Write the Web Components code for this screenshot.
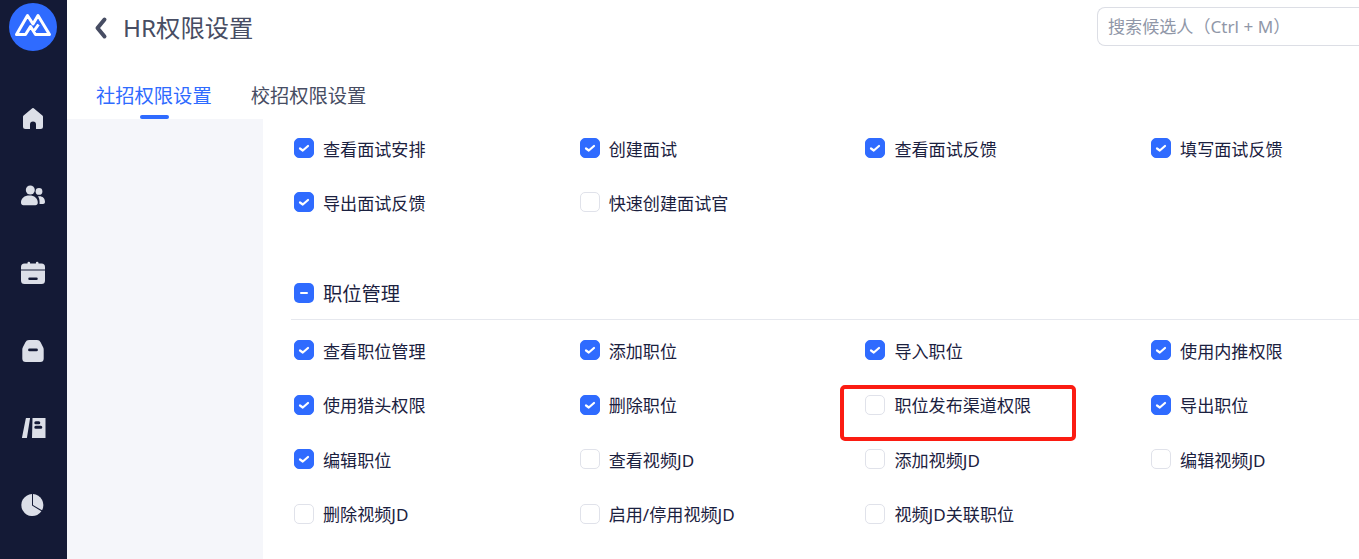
<!DOCTYPE html>
<html lang="zh-CN">
<head>
<meta charset="utf-8">
<title>HR权限设置</title>
<style>
  html, body { margin: 0; height: 100%; overflow: hidden; background: #fff; }
  body { font-family: "Noto Sans", "Noto Sans CJK SC", sans-serif; color: #1b2140; }
</style>
</head>
<body>
<hr-app>
  <side-bar slot="side"></side-bar>
  <page-header slot="header" title-text="HR权限设置">
    <search-box slot="search" placeholder="搜索候选人（Ctrl + M）"></search-box>
    <tab-item slot="tabs" active>社招权限设置</tab-item>
    <tab-item slot="tabs">校招权限设置</tab-item>
  </page-header>
  <perm-panel slot="main">
    <perm-grid class="first">
      <perm-item checked>查看面试安排</perm-item>
      <perm-item checked>创建面试</perm-item>
      <perm-item checked>查看面试反馈</perm-item>
      <perm-item checked>填写面试反馈</perm-item>
      <perm-item checked>导出面试反馈</perm-item>
      <perm-item>快速创建面试官</perm-item>
    </perm-grid>
    <perm-heading>职位管理</perm-heading>
    <perm-grid>
      <perm-item checked>查看职位管理</perm-item>
      <perm-item checked>添加职位</perm-item>
      <perm-item checked>导入职位</perm-item>
      <perm-item checked>使用内推权限</perm-item>
      <perm-item checked>使用猎头权限</perm-item>
      <perm-item checked>删除职位</perm-item>
      <perm-item>职位发布渠道权限</perm-item>
      <perm-item checked>导出职位</perm-item>
      <perm-item checked>编辑职位</perm-item>
      <perm-item>查看视频JD</perm-item>
      <perm-item>添加视频JD</perm-item>
      <perm-item>编辑视频JD</perm-item>
      <perm-item>删除视频JD</perm-item>
      <perm-item>启用/停用视频JD</perm-item>
      <perm-item>视频JD关联职位</perm-item>
    </perm-grid>
  </perm-panel>
  <red-mark slot="overlay"></red-mark>
</hr-app>

<script>
class HrApp extends HTMLElement {
  constructor() {
    super();
    this.attachShadow({ mode: "open" });
    this.shadowRoot.innerHTML = `
      <style>
        :host { display: grid; grid-template-columns: 67px 1fr; width: 100%; height: 100vh; overflow: hidden; position: relative; }
        .right { display: flex; flex-direction: column; min-width: 0; height: 100vh; overflow: hidden; }
        .body { flex: 1; display: grid; grid-template-columns: 196px 1fr; min-height: 0; }
        .left { background: #f5f6fa; }
        .main { background: #fff; overflow: hidden; min-width: 0; }
      </style>
      <slot name="side"></slot>
      <div class="right">
        <slot name="header"></slot>
        <div class="body">
          <div class="left"></div>
          <div class="main"><slot name="main"></slot></div>
        </div>
      </div>
      <slot name="overlay"></slot>`;
  }
}

const NAV_ICONS = [
  // home
  `<path d="M12.700 1.300a1.100 1.100 0 0 0-1.400 0L2.600 8.400A1.800 1.800 0 0 0 2 9.700v9.800A2.500 2.500 0 0 0 4.500 22H9v-4.500a3 3 0 0 1 6 0V22h4.500a2.500 2.500 0 0 0 2.500-2.500V9.700a1.800 1.800 0 0 0-.6-1.300z"/>`,
  // people
  `<circle cx="9.300" cy="6" r="4.500"/><path d="M0 18.800C0 14.200 3.400 11.600 8.400 11.600s8.400 2.600 8.400 7.200c0 1.600-1 2.400-2.400 2.400H2.400C1 21.200 0 20.400 0 18.800z"/><circle cx="18" cy="7.400" r="3.400"/><path d="M17 12.300c3.800-.8 7 1.400 7 5.500 0 1.400-.8 2.200-2 2.200h-3.500c.3-2.800-.1-5.700-1.500-7.700z"/>`,
  // calendar
  `<path d="M6.500 2.500V2a1.300 1.300 0 0 1 2.600 0v.5h5.800V2a1.300 1.300 0 0 1 2.600 0v.5h3A3.500 3.500 0 0 1 24 6v2.500H0V6a3.500 3.500 0 0 1 3.500-3.500z"/><path fill-rule="evenodd" d="M0 9.500h24v10A3.500 3.500 0 0 1 20.500 23h-17A3.500 3.500 0 0 1 0 19.500zM8.500 16.500a1 1 0 0 0 0 2.500h7a1 1 0 0 0 0-2.500z"/>`,
  // briefcase
  `<path fill-rule="evenodd" d="M8 1h8a4 4 0 0 1 3.600 2.300l2.400 4.700c.5.800.7 1.500.7 2.400v9.100a3.500 3.500 0 0 1-3.500 3.500H4.800a3.500 3.500 0 0 1-3.500-3.500v-9.100c0-.9.200-1.600.7-2.400l2.400-4.700A4 4 0 0 1 8 1zM8.500 9.500a1.400 1.400 0 0 0 0 2.800h7a1.400 1.400 0 0 0 0-2.800z"/>`,
  // book
  `<path d="M4.800 2.500a.5.500 0 0 1 .5-.5h3.800L6 21.500a.6.600 0 0 1-.6.500H1.500a.5.500 0 0 1-.5-.6z"/><path fill-rule="evenodd" d="M11.500 2H24.500V22H11zM14.800 5.300a1.500 1.500 0 0 0 0 3h3a1.500 1.500 0 0 0 0-3zm0 4.500a1.500 1.500 0 0 0 0 3h5a1.500 1.500 0 0 0 0-3z"/>`,
  // pie
  `<path d="M11 1.100A11 11 0 1 0 20.400 18.300L11 12.600z"/><path d="M12 1A11 11 0 0 1 21 17.300L12 12z"/>`
];

class SideBar extends HTMLElement {
  constructor() {
    super();
    this.attachShadow({ mode: "open" });
    this.shadowRoot.innerHTML = `
      <style>
        :host { display: flex; flex-direction: column; align-items: center; background: #141a36; height: 100vh; padding: 3px 1px 0 0; box-sizing: border-box; }
        .logo { width: 48px; height: 48px; display: block; margin-bottom: 56px; }
        .nav { display: flex; flex-direction: column; gap: 53.200px; }
        .nav svg { display: block; width: 24px; height: 24px; fill: #dcdfe8; overflow: visible; }
      </style>
      <svg class="logo" viewBox="0 0 48 48">
        <circle cx="24" cy="24" r="24" fill="#2f6bff"/>
        <path d="M7.500 31.500 L18.500 12.500 L24 21 L29 12.500 L40.500 31.500 H26.500 L21.500 23.500 L16.500 31.500 Z M29.500 21.500 L24.500 28.500" fill="none" stroke="#fff" stroke-width="3" stroke-linejoin="round"/>
      </svg>
      <div class="nav">
        ${NAV_ICONS.map(p => `<svg viewBox="0 0 24 24">${p}</svg>`).join("")}
      </div>`;
  }
}

class PageHeader extends HTMLElement {
  constructor() {
    super();
    this.attachShadow({ mode: "open" });
    this.shadowRoot.innerHTML = `
      <style>
        :host { display: block; height: 119px; background: #fff; box-sizing: border-box; }
        .top { display: flex; align-items: center; height: 55px; padding-left: 27px; }
        .back { width: 14px; height: 24px; margin-right: 15px; flex: none; }
        h1 { margin: 0; font-size: 24.300px; line-height: 32px; font-weight: 400; color: #474d63; flex: 1; }
        .tabs { display: flex; gap: 39px; padding-left: 29px; margin-top: 26px; }
      </style>
      <div class="top">
        <svg class="back" viewBox="0 0 14 24"><path d="M10.500 3.500 L3.500 12 L10.500 20.500" fill="none" stroke="#474d63" stroke-width="4" stroke-linecap="round" stroke-linejoin="round"/></svg>
        <h1></h1>
        <slot name="search"></slot>
      </div>
      <div class="tabs"><slot name="tabs"></slot></div>`;
    this.shadowRoot.querySelector("h1").textContent = this.getAttribute("title-text") || "";
  }
}

class SearchBox extends HTMLElement {
  constructor() {
    super();
    this.attachShadow({ mode: "open" });
    this.shadowRoot.innerHTML = `
      <style>
        :host { display: block; width: 262px; height: 39px; box-sizing: border-box; align-self: flex-start; margin-top: 7px; border: 1px solid #dcdee5; border-right: 0; border-radius: 8px 0 0 8px; padding-left: 10px; line-height: 38px; font-size: 17.100px; color: #9097a8; white-space: nowrap; overflow: hidden; }
      </style>
      <span></span>`;
    this.shadowRoot.querySelector("span").textContent = this.getAttribute("placeholder") || "";
  }
}

class TabItem extends HTMLElement {
  constructor() {
    super();
    this.attachShadow({ mode: "open" });
    this.shadowRoot.innerHTML = `
      <style>
        :host { display: block; position: relative; font-size: 19.300px; line-height: 30px; height: 38px; color: #474d63; white-space: nowrap; }
        :host([active]) { color: #2f6bff; }
        :host([active])::after { content: ""; position: absolute; left: 44px; bottom: 0; width: 29px; height: 4px; border-radius: 2px; background: #2f6bff; }
      </style>
      <slot></slot>`;
  }
}

class PermPanel extends HTMLElement {
  constructor() {
    super();
    this.attachShadow({ mode: "open" });
    this.shadowRoot.innerHTML = `
      <style>
        :host { display: block; padding-left: 28px; }
      </style>
      <slot></slot>`;
  }
}

class PermHeading extends HTMLElement {
  constructor() {
    super();
    this.attachShadow({ mode: "open" });
    this.shadowRoot.innerHTML = `
      <style>
        :host { display: flex; align-items: flex-start; gap: 9px; height: 51px; padding-left: 3px; border-bottom: 1px solid #e6e8ee; font-size: 19.300px; color: #1b2140; margin-top: 39px; box-sizing: border-box; }
        .box { width: 20px; height: 20px; border-radius: 5px; background: #2f6bff; display: flex; align-items: center; justify-content: center; margin-top: 14px; flex: none; }
        .box i { width: 8px; height: 2.500px; border-radius: 1px; background: #fff; }
        span { line-height: 28px; margin-top: 11px; }
      </style>
      <div class="box"><i></i></div><span><slot></slot></span>`;
  }
}

class PermGrid extends HTMLElement {
  constructor() {
    super();
    this.attachShadow({ mode: "open" });
    this.shadowRoot.innerHTML = `
      <style>
        :host { display: grid; grid-template-columns: repeat(4, 285.700px); grid-auto-rows: 54.400px; padding: 3.700px 0 0 3px; }
        :host(.first) { padding-top: 2px; }
      </style>
      <slot></slot>`;
  }
}

class PermItem extends HTMLElement {
  constructor() {
    super();
    this.attachShadow({ mode: "open" });
    this.shadowRoot.innerHTML = `
      <style>
        :host { display: flex; align-items: center; gap: 9px; height: 54px; font-size: 17.100px; color: #1b2140; white-space: nowrap; }
        .box { width: 20px; height: 20px; box-sizing: border-box; border-radius: 5px; border: 1px solid #e0e2ea; background: #fff; flex: none; }
        :host([checked]) .box { background: #2f6bff; border-color: #2f6bff; display: flex; align-items: center; justify-content: center; }
        svg { display: none; width: 12px; height: 10px; }
        :host([checked]) svg { display: block; }
      </style>
      <div class="box"><svg viewBox="0 0 12 10"><path d="M2 5.500 L4.800 7.500 L10 3" fill="none" stroke="#fff" stroke-width="2.200" stroke-linecap="round" stroke-linejoin="round"/></svg></div>
      <span><slot></slot></span>`;
  }
}

class RedMark extends HTMLElement {
  constructor() {
    super();
    this.attachShadow({ mode: "open" });
    this.shadowRoot.innerHTML = `
      <style>
        :host { display: block; position: absolute; left: 840px; top: 385px; width: 236px; height: 56px; box-sizing: border-box; border: 4px solid #fb1c12; border-radius: 5px; pointer-events: none; }
      </style>`;
  }
}

customElements.define("hr-app", HrApp);
customElements.define("side-bar", SideBar);
customElements.define("page-header", PageHeader);
customElements.define("search-box", SearchBox);
customElements.define("tab-item", TabItem);
customElements.define("perm-panel", PermPanel);
customElements.define("perm-heading", PermHeading);
customElements.define("perm-grid", PermGrid);
customElements.define("perm-item", PermItem);
customElements.define("red-mark", RedMark);
</script>
</body>
</html>
